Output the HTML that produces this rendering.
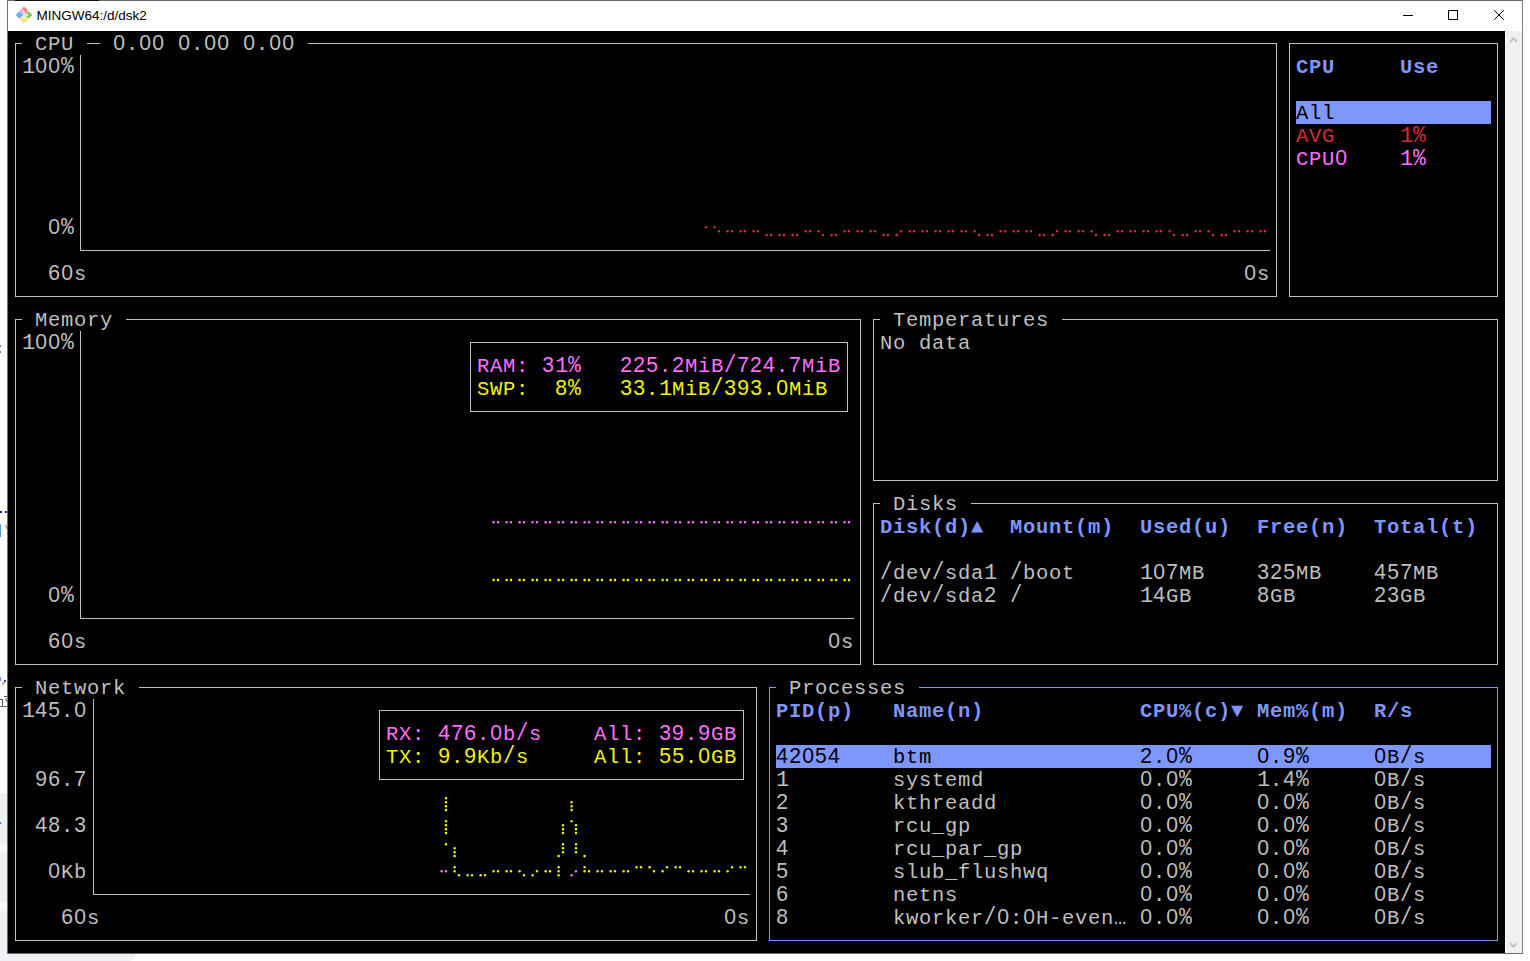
<!DOCTYPE html>
<html><head><meta charset="utf-8"><title>MINGW64:/d/dsk2</title>
<style>
html,body{margin:0;padding:0;background:#fff;}
body{width:1530px;height:961px;position:relative;overflow:hidden;font-family:"Liberation Sans",sans-serif;}
#win{position:absolute;left:7px;top:0;width:1516px;height:954px;background:#fff;}
#bt{position:absolute;left:7px;top:0;width:1516px;height:1px;background:#6b6b6b;}
#bl{position:absolute;left:7px;top:0;width:1px;height:954px;background:#707070;}
#br{position:absolute;left:1522px;top:0;width:1px;height:954px;background:#808080;}
#bb{position:absolute;left:7px;top:953px;width:1516px;height:1px;background:#6b6b6b;}
#title{position:absolute;left:36.5px;top:8px;font-size:13.5px;line-height:16px;color:#000;white-space:pre;}
#term{position:absolute;left:8px;top:31px;width:1497px;height:922px;background:#000;}
#sb{position:absolute;left:1506px;top:31px;width:16px;height:922px;background:#f0f0f0;}
.t{position:absolute;height:23px;line-height:23px;font-family:"Liberation Mono",monospace;font-size:20.500px;letter-spacing:0.6980px;white-space:pre;color:#bfbfbf;}
.b{font-weight:bold;-webkit-text-stroke:0;}
.d{font-family:"Liberation Sans",sans-serif;font-size:21.2px;letter-spacing:1.2096px;line-height:0;position:relative;left:0.15px;}
.p{transform:scale(1.04,1.13);transform-origin:0 17px;}
.q{transform:scale(1,1.2);transform-origin:0 17px;}
.o{font-size:22.1px;letter-spacing:-0.2622px;line-height:0;}
.h{position:absolute;}
svg{position:absolute;left:0;top:0;}
</style></head><body>
<div class="h" style="left:0px;top:793px;width:7px;height:168px;background:#eff0f4;"></div><div class="h" style="left:0px;top:843px;width:7px;height:8.5px;background:#f8f8fa;"></div><div class="h" style="left:0px;top:902px;width:7px;height:9px;background:#f8f8fa;"></div><div class="h" style="left:0px;top:954px;width:136px;height:7px;background:#f0f1f4;border-radius:0 0 26px 0;"></div><div class="h" style="left:0px;top:345px;width:1.3px;height:1.6px;background:#5b7fc7;"></div><div class="h" style="left:0px;top:351px;width:1.3px;height:2.4px;background:#5b7fc7;"></div><div class="h" style="left:0px;top:511px;width:2px;height:2px;background:#2a00b0;"></div><div class="h" style="left:5px;top:511px;width:2px;height:2px;background:#5a109a;"></div><div class="h" style="left:0px;top:524px;width:1.2px;height:13px;background:#5b9bd5;"></div><div class="h" style="left:5.5px;top:525px;width:1.2px;height:5px;background:#8c7a70;transform:rotate(-20deg);"></div><div class="h" style="left:0px;top:677px;width:1.3px;height:3.5px;background:#5b8fd0;"></div><div class="h" style="left:3.6px;top:680px;width:2.2px;height:2.4px;background:#4a4f80;"></div><div class="h" style="left:3.2px;top:682px;width:1.4px;height:2.6px;background:#6a6070;transform:rotate(35deg);"></div><div class="h" style="left:3.5px;top:696px;width:3.5px;height:1px;background:#555;"></div><div class="h" style="left:0px;top:699px;width:2.6px;height:1px;background:#555;"></div><div class="h" style="left:2px;top:699px;width:1px;height:7px;background:#555;"></div><div class="h" style="left:0px;top:706px;width:7px;height:1px;background:#666;"></div><div class="h" style="left:5.6px;top:698px;width:1px;height:5px;background:#667;transform:rotate(-25deg);"></div><div class="h" style="left:0px;top:822px;width:1.3px;height:1.6px;background:#3a7bd5;"></div>
<div id="win"></div><div id="term"></div><div id="sb"></div>
<div id="bt"></div><div id="bl"></div><div id="br"></div><div id="bb"></div>
<div class="h" style="left:15px;top:0;width:84px;height:1px;background:#111"></div><div id="title">MINGW64:/d/dsk2</div>
<svg width="1530" height="961" viewBox="0 0 1530 961"><g transform="translate(24,14.9) rotate(45)"><rect x="-5.95" y="-5.95" width="5.6" height="5.6" rx="0.7" fill="#ff7a7c"/><rect x="0.35" y="-5.95" width="5.6" height="5.6" rx="0.7" fill="#7dcd55"/><rect x="-5.95" y="0.35" width="5.6" height="5.6" rx="0.7" fill="#78aaff"/><rect x="0.35" y="0.35" width="5.6" height="5.6" rx="0.7" fill="#ffe173"/><path d="M-6.2 -2.45L-2.1 -2.15" stroke="#fff" stroke-width="1.1" fill="none"/></g><path d="M24 11.9V18.25M24 14.95H27.25" stroke="#fff" stroke-width="0.75" fill="none"/><circle cx="24" cy="11.9" r="0.95" fill="#fff"/><circle cx="27.25" cy="15" r="0.95" fill="#fff"/><circle cx="24" cy="18.25" r="0.95" fill="#fff"/><g stroke="#000" stroke-width="1" fill="none" shape-rendering="crispEdges"><path d="M1403 15.5H1413"/><rect x="1448.5" y="10.5" width="9" height="9"/></g><path d="M1494.2 10.2L1503.8 19.8M1503.8 10.2L1494.2 19.8" stroke="#000" stroke-width="1" fill="none"/><path d="M1513.5 37L1517 40.5V43L1513.5 39.8L1510 43V40.5Z" fill="#c1c1c1"/><path d="M1510 942L1513.5 945.2L1517 942V944.5L1513.5 948L1510 944.5Z" fill="#c1c1c1"/><g shape-rendering="crispEdges"><rect x="1296" y="101" width="195" height="23" fill="#7d97ff"/><rect x="776" y="745" width="715" height="23" fill="#7d97ff"/><path fill="#bfbfbf" d="M15 43h1v254h-1zM1276 43h1v254h-1zM15 296h1262v1h-1262zM15 43h7v1h-7zM87 43h13v1h-13zM308 43h969v1h-969zM80 55h1v196h-1zM80 250h1190v1h-1190zM1289 43h1v254h-1zM1497 43h1v254h-1zM1289 296h209v1h-209zM1289 43h209v1h-209zM15 319h1v346h-1zM860 319h1v346h-1zM15 664h846v1h-846zM15 319h7v1h-7zM126 319h735v1h-735zM80 331h1v288h-1zM80 618h774v1h-774zM470 342h1v70h-1zM847 342h1v70h-1zM470 411h378v1h-378zM470 342h378v1h-378zM873 319h1v162h-1zM1497 319h1v162h-1zM873 480h625v1h-625zM873 319h7v1h-7zM1062 319h436v1h-436zM873 503h1v162h-1zM1497 503h1v162h-1zM873 664h625v1h-625zM873 503h7v1h-7zM971 503h527v1h-527zM15 687h1v254h-1zM756 687h1v254h-1zM15 940h742v1h-742zM15 687h7v1h-7zM139 687h618v1h-618zM93 699h1v196h-1zM93 894h657v1h-657zM379 710h1v70h-1zM743 710h1v70h-1zM379 779h365v1h-365zM379 710h365v1h-365z"/><path fill="#7d97ff" d="M769 687h1v254h-1zM1497 687h1v254h-1zM769 940h729v1h-729zM769 687h7v1h-7zM919 687h579v1h-579z"/></g><path fill="#d42c3a" d="M704.7 227.3a1.30 1.30 0 1 0 2.60 0a1.30 1.30 0 1 0 -2.60 0zM713.3 227.3a1.30 1.30 0 1 0 2.60 0a1.30 1.30 0 1 0 -2.60 0zM717.7 231.2a1.30 1.30 0 1 0 2.60 0a1.30 1.30 0 1 0 -2.60 0zM726.3 231.2a1.30 1.30 0 1 0 2.60 0a1.30 1.30 0 1 0 -2.60 0zM730.7 231.2a1.30 1.30 0 1 0 2.60 0a1.30 1.30 0 1 0 -2.60 0zM739.3 231.2a1.30 1.30 0 1 0 2.60 0a1.30 1.30 0 1 0 -2.60 0zM743.7 231.2a1.30 1.30 0 1 0 2.60 0a1.30 1.30 0 1 0 -2.60 0zM752.3 231.2a1.30 1.30 0 1 0 2.60 0a1.30 1.30 0 1 0 -2.60 0zM756.7 231.2a1.30 1.30 0 1 0 2.60 0a1.30 1.30 0 1 0 -2.60 0zM765.3 235.1a1.30 1.30 0 1 0 2.60 0a1.30 1.30 0 1 0 -2.60 0zM769.7 235.1a1.30 1.30 0 1 0 2.60 0a1.30 1.30 0 1 0 -2.60 0zM778.3 235.1a1.30 1.30 0 1 0 2.60 0a1.30 1.30 0 1 0 -2.60 0zM782.7 235.1a1.30 1.30 0 1 0 2.60 0a1.30 1.30 0 1 0 -2.60 0zM791.3 235.1a1.30 1.30 0 1 0 2.60 0a1.30 1.30 0 1 0 -2.60 0zM795.7 235.1a1.30 1.30 0 1 0 2.60 0a1.30 1.30 0 1 0 -2.60 0zM804.3 231.2a1.30 1.30 0 1 0 2.60 0a1.30 1.30 0 1 0 -2.60 0zM808.7 231.2a1.30 1.30 0 1 0 2.60 0a1.30 1.30 0 1 0 -2.60 0zM817.3 231.2a1.30 1.30 0 1 0 2.60 0a1.30 1.30 0 1 0 -2.60 0zM821.7 235.1a1.30 1.30 0 1 0 2.60 0a1.30 1.30 0 1 0 -2.60 0zM830.3 235.1a1.30 1.30 0 1 0 2.60 0a1.30 1.30 0 1 0 -2.60 0zM834.7 235.1a1.30 1.30 0 1 0 2.60 0a1.30 1.30 0 1 0 -2.60 0zM843.3 231.2a1.30 1.30 0 1 0 2.60 0a1.30 1.30 0 1 0 -2.60 0zM847.7 231.2a1.30 1.30 0 1 0 2.60 0a1.30 1.30 0 1 0 -2.60 0zM856.3 231.2a1.30 1.30 0 1 0 2.60 0a1.30 1.30 0 1 0 -2.60 0zM860.7 231.2a1.30 1.30 0 1 0 2.60 0a1.30 1.30 0 1 0 -2.60 0zM869.3 231.2a1.30 1.30 0 1 0 2.60 0a1.30 1.30 0 1 0 -2.60 0zM873.7 231.2a1.30 1.30 0 1 0 2.60 0a1.30 1.30 0 1 0 -2.60 0zM882.3 235.1a1.30 1.30 0 1 0 2.60 0a1.30 1.30 0 1 0 -2.60 0zM886.7 235.1a1.30 1.30 0 1 0 2.60 0a1.30 1.30 0 1 0 -2.60 0zM895.3 235.1a1.30 1.30 0 1 0 2.60 0a1.30 1.30 0 1 0 -2.60 0zM899.7 231.2a1.30 1.30 0 1 0 2.60 0a1.30 1.30 0 1 0 -2.60 0zM908.3 231.2a1.30 1.30 0 1 0 2.60 0a1.30 1.30 0 1 0 -2.60 0zM912.7 231.2a1.30 1.30 0 1 0 2.60 0a1.30 1.30 0 1 0 -2.60 0zM921.3 231.2a1.30 1.30 0 1 0 2.60 0a1.30 1.30 0 1 0 -2.60 0zM925.7 231.2a1.30 1.30 0 1 0 2.60 0a1.30 1.30 0 1 0 -2.60 0zM934.3 231.2a1.30 1.30 0 1 0 2.60 0a1.30 1.30 0 1 0 -2.60 0zM938.7 231.2a1.30 1.30 0 1 0 2.60 0a1.30 1.30 0 1 0 -2.60 0zM947.3 231.2a1.30 1.30 0 1 0 2.60 0a1.30 1.30 0 1 0 -2.60 0zM951.7 231.2a1.30 1.30 0 1 0 2.60 0a1.30 1.30 0 1 0 -2.60 0zM960.3 231.2a1.30 1.30 0 1 0 2.60 0a1.30 1.30 0 1 0 -2.60 0zM964.7 231.2a1.30 1.30 0 1 0 2.60 0a1.30 1.30 0 1 0 -2.60 0zM973.3 231.2a1.30 1.30 0 1 0 2.60 0a1.30 1.30 0 1 0 -2.60 0zM977.7 235.1a1.30 1.30 0 1 0 2.60 0a1.30 1.30 0 1 0 -2.60 0zM986.3 235.1a1.30 1.30 0 1 0 2.60 0a1.30 1.30 0 1 0 -2.60 0zM990.7 235.1a1.30 1.30 0 1 0 2.60 0a1.30 1.30 0 1 0 -2.60 0zM999.3 231.2a1.30 1.30 0 1 0 2.60 0a1.30 1.30 0 1 0 -2.60 0zM1003.7 231.2a1.30 1.30 0 1 0 2.60 0a1.30 1.30 0 1 0 -2.60 0zM1012.3 231.2a1.30 1.30 0 1 0 2.60 0a1.30 1.30 0 1 0 -2.60 0zM1016.7 231.2a1.30 1.30 0 1 0 2.60 0a1.30 1.30 0 1 0 -2.60 0zM1025.3 231.2a1.30 1.30 0 1 0 2.60 0a1.30 1.30 0 1 0 -2.60 0zM1029.7 231.2a1.30 1.30 0 1 0 2.60 0a1.30 1.30 0 1 0 -2.60 0zM1038.3 235.1a1.30 1.30 0 1 0 2.60 0a1.30 1.30 0 1 0 -2.60 0zM1042.7 235.1a1.30 1.30 0 1 0 2.60 0a1.30 1.30 0 1 0 -2.60 0zM1051.3 235.1a1.30 1.30 0 1 0 2.60 0a1.30 1.30 0 1 0 -2.60 0zM1055.7 231.2a1.30 1.30 0 1 0 2.60 0a1.30 1.30 0 1 0 -2.60 0zM1064.3 231.2a1.30 1.30 0 1 0 2.60 0a1.30 1.30 0 1 0 -2.60 0zM1068.7 231.2a1.30 1.30 0 1 0 2.60 0a1.30 1.30 0 1 0 -2.60 0zM1077.3 231.2a1.30 1.30 0 1 0 2.60 0a1.30 1.30 0 1 0 -2.60 0zM1081.7 231.2a1.30 1.30 0 1 0 2.60 0a1.30 1.30 0 1 0 -2.60 0zM1090.3 231.2a1.30 1.30 0 1 0 2.60 0a1.30 1.30 0 1 0 -2.60 0zM1094.7 235.1a1.30 1.30 0 1 0 2.60 0a1.30 1.30 0 1 0 -2.60 0zM1103.3 235.1a1.30 1.30 0 1 0 2.60 0a1.30 1.30 0 1 0 -2.60 0zM1107.7 235.1a1.30 1.30 0 1 0 2.60 0a1.30 1.30 0 1 0 -2.60 0zM1116.3 231.2a1.30 1.30 0 1 0 2.60 0a1.30 1.30 0 1 0 -2.60 0zM1120.7 231.2a1.30 1.30 0 1 0 2.60 0a1.30 1.30 0 1 0 -2.60 0zM1129.3 231.2a1.30 1.30 0 1 0 2.60 0a1.30 1.30 0 1 0 -2.60 0zM1133.7 231.2a1.30 1.30 0 1 0 2.60 0a1.30 1.30 0 1 0 -2.60 0zM1142.3 231.2a1.30 1.30 0 1 0 2.60 0a1.30 1.30 0 1 0 -2.60 0zM1146.7 231.2a1.30 1.30 0 1 0 2.60 0a1.30 1.30 0 1 0 -2.60 0zM1155.3 231.2a1.30 1.30 0 1 0 2.60 0a1.30 1.30 0 1 0 -2.60 0zM1159.7 231.2a1.30 1.30 0 1 0 2.60 0a1.30 1.30 0 1 0 -2.60 0zM1168.3 231.2a1.30 1.30 0 1 0 2.60 0a1.30 1.30 0 1 0 -2.60 0zM1172.7 235.1a1.30 1.30 0 1 0 2.60 0a1.30 1.30 0 1 0 -2.60 0zM1181.3 235.1a1.30 1.30 0 1 0 2.60 0a1.30 1.30 0 1 0 -2.60 0zM1185.7 235.1a1.30 1.30 0 1 0 2.60 0a1.30 1.30 0 1 0 -2.60 0zM1194.3 231.2a1.30 1.30 0 1 0 2.60 0a1.30 1.30 0 1 0 -2.60 0zM1198.7 231.2a1.30 1.30 0 1 0 2.60 0a1.30 1.30 0 1 0 -2.60 0zM1207.3 231.2a1.30 1.30 0 1 0 2.60 0a1.30 1.30 0 1 0 -2.60 0zM1211.7 235.1a1.30 1.30 0 1 0 2.60 0a1.30 1.30 0 1 0 -2.60 0zM1220.3 235.1a1.30 1.30 0 1 0 2.60 0a1.30 1.30 0 1 0 -2.60 0zM1224.7 235.1a1.30 1.30 0 1 0 2.60 0a1.30 1.30 0 1 0 -2.60 0zM1233.3 231.2a1.30 1.30 0 1 0 2.60 0a1.30 1.30 0 1 0 -2.60 0zM1237.7 231.2a1.30 1.30 0 1 0 2.60 0a1.30 1.30 0 1 0 -2.60 0zM1246.3 231.2a1.30 1.30 0 1 0 2.60 0a1.30 1.30 0 1 0 -2.60 0zM1250.7 231.2a1.30 1.30 0 1 0 2.60 0a1.30 1.30 0 1 0 -2.60 0zM1259.3 231.2a1.30 1.30 0 1 0 2.60 0a1.30 1.30 0 1 0 -2.60 0zM1263.7 231.2a1.30 1.30 0 1 0 2.60 0a1.30 1.30 0 1 0 -2.60 0z"/><path fill="#ff70ff" d="M492.3 522.3a1.30 1.30 0 1 0 2.60 0a1.30 1.30 0 1 0 -2.60 0zM496.7 522.3a1.30 1.30 0 1 0 2.60 0a1.30 1.30 0 1 0 -2.60 0zM505.3 522.3a1.30 1.30 0 1 0 2.60 0a1.30 1.30 0 1 0 -2.60 0zM509.7 522.3a1.30 1.30 0 1 0 2.60 0a1.30 1.30 0 1 0 -2.60 0zM518.3 522.3a1.30 1.30 0 1 0 2.60 0a1.30 1.30 0 1 0 -2.60 0zM522.7 522.3a1.30 1.30 0 1 0 2.60 0a1.30 1.30 0 1 0 -2.60 0zM531.3 522.3a1.30 1.30 0 1 0 2.60 0a1.30 1.30 0 1 0 -2.60 0zM535.7 522.3a1.30 1.30 0 1 0 2.60 0a1.30 1.30 0 1 0 -2.60 0zM544.3 522.3a1.30 1.30 0 1 0 2.60 0a1.30 1.30 0 1 0 -2.60 0zM548.7 522.3a1.30 1.30 0 1 0 2.60 0a1.30 1.30 0 1 0 -2.60 0zM557.3 522.3a1.30 1.30 0 1 0 2.60 0a1.30 1.30 0 1 0 -2.60 0zM561.7 522.3a1.30 1.30 0 1 0 2.60 0a1.30 1.30 0 1 0 -2.60 0zM570.3 522.3a1.30 1.30 0 1 0 2.60 0a1.30 1.30 0 1 0 -2.60 0zM574.7 522.3a1.30 1.30 0 1 0 2.60 0a1.30 1.30 0 1 0 -2.60 0zM583.3 522.3a1.30 1.30 0 1 0 2.60 0a1.30 1.30 0 1 0 -2.60 0zM587.7 522.3a1.30 1.30 0 1 0 2.60 0a1.30 1.30 0 1 0 -2.60 0zM596.3 522.3a1.30 1.30 0 1 0 2.60 0a1.30 1.30 0 1 0 -2.60 0zM600.7 522.3a1.30 1.30 0 1 0 2.60 0a1.30 1.30 0 1 0 -2.60 0zM609.3 522.3a1.30 1.30 0 1 0 2.60 0a1.30 1.30 0 1 0 -2.60 0zM613.7 522.3a1.30 1.30 0 1 0 2.60 0a1.30 1.30 0 1 0 -2.60 0zM622.3 522.3a1.30 1.30 0 1 0 2.60 0a1.30 1.30 0 1 0 -2.60 0zM626.7 522.3a1.30 1.30 0 1 0 2.60 0a1.30 1.30 0 1 0 -2.60 0zM635.3 522.3a1.30 1.30 0 1 0 2.60 0a1.30 1.30 0 1 0 -2.60 0zM639.7 522.3a1.30 1.30 0 1 0 2.60 0a1.30 1.30 0 1 0 -2.60 0zM648.3 522.3a1.30 1.30 0 1 0 2.60 0a1.30 1.30 0 1 0 -2.60 0zM652.7 522.3a1.30 1.30 0 1 0 2.60 0a1.30 1.30 0 1 0 -2.60 0zM661.3 522.3a1.30 1.30 0 1 0 2.60 0a1.30 1.30 0 1 0 -2.60 0zM665.7 522.3a1.30 1.30 0 1 0 2.60 0a1.30 1.30 0 1 0 -2.60 0zM674.3 522.3a1.30 1.30 0 1 0 2.60 0a1.30 1.30 0 1 0 -2.60 0zM678.7 522.3a1.30 1.30 0 1 0 2.60 0a1.30 1.30 0 1 0 -2.60 0zM687.3 522.3a1.30 1.30 0 1 0 2.60 0a1.30 1.30 0 1 0 -2.60 0zM691.7 522.3a1.30 1.30 0 1 0 2.60 0a1.30 1.30 0 1 0 -2.60 0zM700.3 522.3a1.30 1.30 0 1 0 2.60 0a1.30 1.30 0 1 0 -2.60 0zM704.7 522.3a1.30 1.30 0 1 0 2.60 0a1.30 1.30 0 1 0 -2.60 0zM713.3 522.3a1.30 1.30 0 1 0 2.60 0a1.30 1.30 0 1 0 -2.60 0zM717.7 522.3a1.30 1.30 0 1 0 2.60 0a1.30 1.30 0 1 0 -2.60 0zM726.3 522.3a1.30 1.30 0 1 0 2.60 0a1.30 1.30 0 1 0 -2.60 0zM730.7 522.3a1.30 1.30 0 1 0 2.60 0a1.30 1.30 0 1 0 -2.60 0zM739.3 522.3a1.30 1.30 0 1 0 2.60 0a1.30 1.30 0 1 0 -2.60 0zM743.7 522.3a1.30 1.30 0 1 0 2.60 0a1.30 1.30 0 1 0 -2.60 0zM752.3 522.3a1.30 1.30 0 1 0 2.60 0a1.30 1.30 0 1 0 -2.60 0zM756.7 522.3a1.30 1.30 0 1 0 2.60 0a1.30 1.30 0 1 0 -2.60 0zM765.3 522.3a1.30 1.30 0 1 0 2.60 0a1.30 1.30 0 1 0 -2.60 0zM769.7 522.3a1.30 1.30 0 1 0 2.60 0a1.30 1.30 0 1 0 -2.60 0zM778.3 522.3a1.30 1.30 0 1 0 2.60 0a1.30 1.30 0 1 0 -2.60 0zM782.7 522.3a1.30 1.30 0 1 0 2.60 0a1.30 1.30 0 1 0 -2.60 0zM791.3 522.3a1.30 1.30 0 1 0 2.60 0a1.30 1.30 0 1 0 -2.60 0zM795.7 522.3a1.30 1.30 0 1 0 2.60 0a1.30 1.30 0 1 0 -2.60 0zM804.3 522.3a1.30 1.30 0 1 0 2.60 0a1.30 1.30 0 1 0 -2.60 0zM808.7 522.3a1.30 1.30 0 1 0 2.60 0a1.30 1.30 0 1 0 -2.60 0zM817.3 522.3a1.30 1.30 0 1 0 2.60 0a1.30 1.30 0 1 0 -2.60 0zM821.7 522.3a1.30 1.30 0 1 0 2.60 0a1.30 1.30 0 1 0 -2.60 0zM830.3 522.3a1.30 1.30 0 1 0 2.60 0a1.30 1.30 0 1 0 -2.60 0zM834.7 522.3a1.30 1.30 0 1 0 2.60 0a1.30 1.30 0 1 0 -2.60 0zM843.3 522.3a1.30 1.30 0 1 0 2.60 0a1.30 1.30 0 1 0 -2.60 0zM847.7 522.3a1.30 1.30 0 1 0 2.60 0a1.30 1.30 0 1 0 -2.60 0zM440.3 871.3a1.30 1.30 0 1 0 2.60 0a1.30 1.30 0 1 0 -2.60 0zM444.7 871.3a1.30 1.30 0 1 0 2.60 0a1.30 1.30 0 1 0 -2.60 0zM570.3 875.2a1.30 1.30 0 1 0 2.60 0a1.30 1.30 0 1 0 -2.60 0zM574.7 871.3a1.30 1.30 0 1 0 2.60 0a1.30 1.30 0 1 0 -2.60 0z"/><path fill="#f2f200" d="M492.3 580.1a1.30 1.30 0 1 0 2.60 0a1.30 1.30 0 1 0 -2.60 0zM496.7 580.1a1.30 1.30 0 1 0 2.60 0a1.30 1.30 0 1 0 -2.60 0zM505.3 580.1a1.30 1.30 0 1 0 2.60 0a1.30 1.30 0 1 0 -2.60 0zM509.7 580.1a1.30 1.30 0 1 0 2.60 0a1.30 1.30 0 1 0 -2.60 0zM518.3 580.1a1.30 1.30 0 1 0 2.60 0a1.30 1.30 0 1 0 -2.60 0zM522.7 580.1a1.30 1.30 0 1 0 2.60 0a1.30 1.30 0 1 0 -2.60 0zM531.3 580.1a1.30 1.30 0 1 0 2.60 0a1.30 1.30 0 1 0 -2.60 0zM535.7 580.1a1.30 1.30 0 1 0 2.60 0a1.30 1.30 0 1 0 -2.60 0zM544.3 580.1a1.30 1.30 0 1 0 2.60 0a1.30 1.30 0 1 0 -2.60 0zM548.7 580.1a1.30 1.30 0 1 0 2.60 0a1.30 1.30 0 1 0 -2.60 0zM557.3 580.1a1.30 1.30 0 1 0 2.60 0a1.30 1.30 0 1 0 -2.60 0zM561.7 580.1a1.30 1.30 0 1 0 2.60 0a1.30 1.30 0 1 0 -2.60 0zM570.3 580.1a1.30 1.30 0 1 0 2.60 0a1.30 1.30 0 1 0 -2.60 0zM574.7 580.1a1.30 1.30 0 1 0 2.60 0a1.30 1.30 0 1 0 -2.60 0zM583.3 580.1a1.30 1.30 0 1 0 2.60 0a1.30 1.30 0 1 0 -2.60 0zM587.7 580.1a1.30 1.30 0 1 0 2.60 0a1.30 1.30 0 1 0 -2.60 0zM596.3 580.1a1.30 1.30 0 1 0 2.60 0a1.30 1.30 0 1 0 -2.60 0zM600.7 580.1a1.30 1.30 0 1 0 2.60 0a1.30 1.30 0 1 0 -2.60 0zM609.3 580.1a1.30 1.30 0 1 0 2.60 0a1.30 1.30 0 1 0 -2.60 0zM613.7 580.1a1.30 1.30 0 1 0 2.60 0a1.30 1.30 0 1 0 -2.60 0zM622.3 580.1a1.30 1.30 0 1 0 2.60 0a1.30 1.30 0 1 0 -2.60 0zM626.7 580.1a1.30 1.30 0 1 0 2.60 0a1.30 1.30 0 1 0 -2.60 0zM635.3 580.1a1.30 1.30 0 1 0 2.60 0a1.30 1.30 0 1 0 -2.60 0zM639.7 580.1a1.30 1.30 0 1 0 2.60 0a1.30 1.30 0 1 0 -2.60 0zM648.3 580.1a1.30 1.30 0 1 0 2.60 0a1.30 1.30 0 1 0 -2.60 0zM652.7 580.1a1.30 1.30 0 1 0 2.60 0a1.30 1.30 0 1 0 -2.60 0zM661.3 580.1a1.30 1.30 0 1 0 2.60 0a1.30 1.30 0 1 0 -2.60 0zM665.7 580.1a1.30 1.30 0 1 0 2.60 0a1.30 1.30 0 1 0 -2.60 0zM674.3 580.1a1.30 1.30 0 1 0 2.60 0a1.30 1.30 0 1 0 -2.60 0zM678.7 580.1a1.30 1.30 0 1 0 2.60 0a1.30 1.30 0 1 0 -2.60 0zM687.3 580.1a1.30 1.30 0 1 0 2.60 0a1.30 1.30 0 1 0 -2.60 0zM691.7 580.1a1.30 1.30 0 1 0 2.60 0a1.30 1.30 0 1 0 -2.60 0zM700.3 580.1a1.30 1.30 0 1 0 2.60 0a1.30 1.30 0 1 0 -2.60 0zM704.7 580.1a1.30 1.30 0 1 0 2.60 0a1.30 1.30 0 1 0 -2.60 0zM713.3 580.1a1.30 1.30 0 1 0 2.60 0a1.30 1.30 0 1 0 -2.60 0zM717.7 580.1a1.30 1.30 0 1 0 2.60 0a1.30 1.30 0 1 0 -2.60 0zM726.3 580.1a1.30 1.30 0 1 0 2.60 0a1.30 1.30 0 1 0 -2.60 0zM730.7 580.1a1.30 1.30 0 1 0 2.60 0a1.30 1.30 0 1 0 -2.60 0zM739.3 580.1a1.30 1.30 0 1 0 2.60 0a1.30 1.30 0 1 0 -2.60 0zM743.7 580.1a1.30 1.30 0 1 0 2.60 0a1.30 1.30 0 1 0 -2.60 0zM752.3 580.1a1.30 1.30 0 1 0 2.60 0a1.30 1.30 0 1 0 -2.60 0zM756.7 580.1a1.30 1.30 0 1 0 2.60 0a1.30 1.30 0 1 0 -2.60 0zM765.3 580.1a1.30 1.30 0 1 0 2.60 0a1.30 1.30 0 1 0 -2.60 0zM769.7 580.1a1.30 1.30 0 1 0 2.60 0a1.30 1.30 0 1 0 -2.60 0zM778.3 580.1a1.30 1.30 0 1 0 2.60 0a1.30 1.30 0 1 0 -2.60 0zM782.7 580.1a1.30 1.30 0 1 0 2.60 0a1.30 1.30 0 1 0 -2.60 0zM791.3 580.1a1.30 1.30 0 1 0 2.60 0a1.30 1.30 0 1 0 -2.60 0zM795.7 580.1a1.30 1.30 0 1 0 2.60 0a1.30 1.30 0 1 0 -2.60 0zM804.3 580.1a1.30 1.30 0 1 0 2.60 0a1.30 1.30 0 1 0 -2.60 0zM808.7 580.1a1.30 1.30 0 1 0 2.60 0a1.30 1.30 0 1 0 -2.60 0zM817.3 580.1a1.30 1.30 0 1 0 2.60 0a1.30 1.30 0 1 0 -2.60 0zM821.7 580.1a1.30 1.30 0 1 0 2.60 0a1.30 1.30 0 1 0 -2.60 0zM830.3 580.1a1.30 1.30 0 1 0 2.60 0a1.30 1.30 0 1 0 -2.60 0zM834.7 580.1a1.30 1.30 0 1 0 2.60 0a1.30 1.30 0 1 0 -2.60 0zM843.3 580.1a1.30 1.30 0 1 0 2.60 0a1.30 1.30 0 1 0 -2.60 0zM847.7 580.1a1.30 1.30 0 1 0 2.60 0a1.30 1.30 0 1 0 -2.60 0zM444.7 798.3a1.30 1.30 0 1 0 2.60 0a1.30 1.30 0 1 0 -2.60 0zM444.7 802.3a1.30 1.30 0 1 0 2.60 0a1.30 1.30 0 1 0 -2.60 0zM444.7 806.2a1.30 1.30 0 1 0 2.60 0a1.30 1.30 0 1 0 -2.60 0zM444.7 810.1a1.30 1.30 0 1 0 2.60 0a1.30 1.30 0 1 0 -2.60 0zM444.7 821.3a1.30 1.30 0 1 0 2.60 0a1.30 1.30 0 1 0 -2.60 0zM444.7 825.3a1.30 1.30 0 1 0 2.60 0a1.30 1.30 0 1 0 -2.60 0zM444.7 829.2a1.30 1.30 0 1 0 2.60 0a1.30 1.30 0 1 0 -2.60 0zM444.7 833.1a1.30 1.30 0 1 0 2.60 0a1.30 1.30 0 1 0 -2.60 0zM444.7 844.3a1.30 1.30 0 1 0 2.60 0a1.30 1.30 0 1 0 -2.60 0zM453.3 848.3a1.30 1.30 0 1 0 2.60 0a1.30 1.30 0 1 0 -2.60 0zM453.3 852.2a1.30 1.30 0 1 0 2.60 0a1.30 1.30 0 1 0 -2.60 0zM453.3 856.1a1.30 1.30 0 1 0 2.60 0a1.30 1.30 0 1 0 -2.60 0zM453.3 867.3a1.30 1.30 0 1 0 2.60 0a1.30 1.30 0 1 0 -2.60 0zM453.3 871.3a1.30 1.30 0 1 0 2.60 0a1.30 1.30 0 1 0 -2.60 0zM457.7 875.2a1.30 1.30 0 1 0 2.60 0a1.30 1.30 0 1 0 -2.60 0zM466.3 875.2a1.30 1.30 0 1 0 2.60 0a1.30 1.30 0 1 0 -2.60 0zM470.7 875.2a1.30 1.30 0 1 0 2.60 0a1.30 1.30 0 1 0 -2.60 0zM479.3 875.2a1.30 1.30 0 1 0 2.60 0a1.30 1.30 0 1 0 -2.60 0zM483.7 875.2a1.30 1.30 0 1 0 2.60 0a1.30 1.30 0 1 0 -2.60 0zM492.3 871.3a1.30 1.30 0 1 0 2.60 0a1.30 1.30 0 1 0 -2.60 0zM496.7 871.3a1.30 1.30 0 1 0 2.60 0a1.30 1.30 0 1 0 -2.60 0zM505.3 871.3a1.30 1.30 0 1 0 2.60 0a1.30 1.30 0 1 0 -2.60 0zM509.7 871.3a1.30 1.30 0 1 0 2.60 0a1.30 1.30 0 1 0 -2.60 0zM518.3 871.3a1.30 1.30 0 1 0 2.60 0a1.30 1.30 0 1 0 -2.60 0zM522.7 875.2a1.30 1.30 0 1 0 2.60 0a1.30 1.30 0 1 0 -2.60 0zM531.3 875.2a1.30 1.30 0 1 0 2.60 0a1.30 1.30 0 1 0 -2.60 0zM535.7 871.3a1.30 1.30 0 1 0 2.60 0a1.30 1.30 0 1 0 -2.60 0zM544.3 871.3a1.30 1.30 0 1 0 2.60 0a1.30 1.30 0 1 0 -2.60 0zM548.7 871.3a1.30 1.30 0 1 0 2.60 0a1.30 1.30 0 1 0 -2.60 0zM596.3 871.3a1.30 1.30 0 1 0 2.60 0a1.30 1.30 0 1 0 -2.60 0zM600.7 871.3a1.30 1.30 0 1 0 2.60 0a1.30 1.30 0 1 0 -2.60 0zM609.3 871.3a1.30 1.30 0 1 0 2.60 0a1.30 1.30 0 1 0 -2.60 0zM613.7 871.3a1.30 1.30 0 1 0 2.60 0a1.30 1.30 0 1 0 -2.60 0zM622.3 871.3a1.30 1.30 0 1 0 2.60 0a1.30 1.30 0 1 0 -2.60 0zM626.7 871.3a1.30 1.30 0 1 0 2.60 0a1.30 1.30 0 1 0 -2.60 0zM635.3 867.3a1.30 1.30 0 1 0 2.60 0a1.30 1.30 0 1 0 -2.60 0zM639.7 867.3a1.30 1.30 0 1 0 2.60 0a1.30 1.30 0 1 0 -2.60 0zM648.3 867.3a1.30 1.30 0 1 0 2.60 0a1.30 1.30 0 1 0 -2.60 0zM652.7 871.3a1.30 1.30 0 1 0 2.60 0a1.30 1.30 0 1 0 -2.60 0zM661.3 871.3a1.30 1.30 0 1 0 2.60 0a1.30 1.30 0 1 0 -2.60 0zM665.7 867.3a1.30 1.30 0 1 0 2.60 0a1.30 1.30 0 1 0 -2.60 0zM674.3 867.3a1.30 1.30 0 1 0 2.60 0a1.30 1.30 0 1 0 -2.60 0zM678.7 867.3a1.30 1.30 0 1 0 2.60 0a1.30 1.30 0 1 0 -2.60 0zM687.3 871.3a1.30 1.30 0 1 0 2.60 0a1.30 1.30 0 1 0 -2.60 0zM691.7 871.3a1.30 1.30 0 1 0 2.60 0a1.30 1.30 0 1 0 -2.60 0zM700.3 871.3a1.30 1.30 0 1 0 2.60 0a1.30 1.30 0 1 0 -2.60 0zM704.7 871.3a1.30 1.30 0 1 0 2.60 0a1.30 1.30 0 1 0 -2.60 0zM713.3 871.3a1.30 1.30 0 1 0 2.60 0a1.30 1.30 0 1 0 -2.60 0zM717.7 871.3a1.30 1.30 0 1 0 2.60 0a1.30 1.30 0 1 0 -2.60 0zM726.3 871.3a1.30 1.30 0 1 0 2.60 0a1.30 1.30 0 1 0 -2.60 0zM730.7 867.3a1.30 1.30 0 1 0 2.60 0a1.30 1.30 0 1 0 -2.60 0zM739.3 867.3a1.30 1.30 0 1 0 2.60 0a1.30 1.30 0 1 0 -2.60 0zM743.7 867.3a1.30 1.30 0 1 0 2.60 0a1.30 1.30 0 1 0 -2.60 0zM561.7 825.3a1.30 1.30 0 1 0 2.60 0a1.30 1.30 0 1 0 -2.60 0zM561.7 829.2a1.30 1.30 0 1 0 2.60 0a1.30 1.30 0 1 0 -2.60 0zM561.7 833.1a1.30 1.30 0 1 0 2.60 0a1.30 1.30 0 1 0 -2.60 0zM557.3 856.1a1.30 1.30 0 1 0 2.60 0a1.30 1.30 0 1 0 -2.60 0zM561.7 844.3a1.30 1.30 0 1 0 2.60 0a1.30 1.30 0 1 0 -2.60 0zM561.7 848.3a1.30 1.30 0 1 0 2.60 0a1.30 1.30 0 1 0 -2.60 0zM561.7 852.2a1.30 1.30 0 1 0 2.60 0a1.30 1.30 0 1 0 -2.60 0zM557.3 867.3a1.30 1.30 0 1 0 2.60 0a1.30 1.30 0 1 0 -2.60 0zM557.3 871.3a1.30 1.30 0 1 0 2.60 0a1.30 1.30 0 1 0 -2.60 0zM557.3 875.2a1.30 1.30 0 1 0 2.60 0a1.30 1.30 0 1 0 -2.60 0zM570.3 802.3a1.30 1.30 0 1 0 2.60 0a1.30 1.30 0 1 0 -2.60 0zM570.3 806.2a1.30 1.30 0 1 0 2.60 0a1.30 1.30 0 1 0 -2.60 0zM570.3 810.1a1.30 1.30 0 1 0 2.60 0a1.30 1.30 0 1 0 -2.60 0zM570.3 821.3a1.30 1.30 0 1 0 2.60 0a1.30 1.30 0 1 0 -2.60 0zM574.7 825.3a1.30 1.30 0 1 0 2.60 0a1.30 1.30 0 1 0 -2.60 0zM574.7 829.2a1.30 1.30 0 1 0 2.60 0a1.30 1.30 0 1 0 -2.60 0zM574.7 833.1a1.30 1.30 0 1 0 2.60 0a1.30 1.30 0 1 0 -2.60 0zM574.7 844.3a1.30 1.30 0 1 0 2.60 0a1.30 1.30 0 1 0 -2.60 0zM574.7 848.3a1.30 1.30 0 1 0 2.60 0a1.30 1.30 0 1 0 -2.60 0zM574.7 852.2a1.30 1.30 0 1 0 2.60 0a1.30 1.30 0 1 0 -2.60 0zM583.3 856.1a1.30 1.30 0 1 0 2.60 0a1.30 1.30 0 1 0 -2.60 0zM583.3 867.3a1.30 1.30 0 1 0 2.60 0a1.30 1.30 0 1 0 -2.60 0zM583.3 871.3a1.30 1.30 0 1 0 2.60 0a1.30 1.30 0 1 0 -2.60 0zM587.7 871.3a1.30 1.30 0 1 0 2.60 0a1.30 1.30 0 1 0 -2.60 0z"/></svg>
<div class="t" style="left:35px;top:33px;">CPU</div>
<div class="t" style="left:113px;top:33px;"><span class="d">0</span>.<span class="d">00</span> <span class="d">0</span>.<span class="d">00</span> <span class="d">0</span>.<span class="d">00</span></div>
<div class="t p" style="left:61px;top:56px;">%</div>
<div class="t" style="left:22px;top:56px;"><span class="o">1</span><span class="d">00</span></div>
<div class="t p" style="left:61px;top:217px;">%</div>
<div class="t" style="left:48px;top:217px;"><span class="d">0</span></div>
<div class="t" style="left:48px;top:263px;"><span class="d">60</span>s</div>
<div class="t" style="left:1244px;top:263px;"><span class="d">0</span>s</div>
<div class="t b" style="left:1296px;top:56px;color:#7d97ff;">CPU</div>
<div class="t b" style="left:1400px;top:56px;color:#7d97ff;">Use</div>
<div class="t" style="left:1296px;top:102px;color:#000;">All</div>
<div class="t" style="left:1296px;top:125px;color:#d42c3a;">AVG</div>
<div class="t p" style="left:1413px;top:125px;color:#d42c3a;">%</div>
<div class="t" style="left:1400px;top:125px;color:#d42c3a;"><span class="o">1</span></div>
<div class="t" style="left:1296px;top:148px;color:#ff70ff;">CPU<span class="d">0</span></div>
<div class="t p" style="left:1413px;top:148px;color:#ff70ff;">%</div>
<div class="t" style="left:1400px;top:148px;color:#ff70ff;"><span class="o">1</span></div>
<div class="t" style="left:35px;top:309px;">Memory</div>
<div class="t p" style="left:61px;top:332px;">%</div>
<div class="t" style="left:22px;top:332px;"><span class="o">1</span><span class="d">00</span></div>
<div class="t p" style="left:61px;top:585px;">%</div>
<div class="t" style="left:48px;top:585px;"><span class="d">0</span></div>
<div class="t" style="left:48px;top:631px;"><span class="d">60</span>s</div>
<div class="t" style="left:828px;top:631px;"><span class="d">0</span>s</div>
<div class="t p" style="left:568px;top:355px;color:#ff70ff;">%</div>
<div class="t q" style="left:724px;top:355px;color:#ff70ff;">/</div>
<div class="t" style="left:477px;top:355px;color:#ff70ff;">RAM: <span class="d">3</span><span class="o">1</span>    <span class="d">225</span>.<span class="d">2</span>MiB <span class="d">724</span>.<span class="d">7</span>MiB</div>
<div class="t p" style="left:568px;top:378px;color:#f2f200;">%</div>
<div class="t q" style="left:711px;top:378px;color:#f2f200;">/</div>
<div class="t" style="left:477px;top:378px;color:#f2f200;">SWP:  <span class="d">8</span>    <span class="d">33</span>.<span class="o">1</span>MiB <span class="d">393</span>.<span class="d">0</span>MiB</div>
<div class="t" style="left:893px;top:309px;">Temperatures</div>
<div class="t" style="left:880px;top:332px;">No data</div>
<div class="t" style="left:893px;top:493px;">Disks</div>
<div class="t b" style="left:880px;top:516px;color:#7d97ff;">Disk(d)▲</div>
<div class="t b" style="left:1010px;top:516px;color:#7d97ff;">Mount(m)</div>
<div class="t b" style="left:1140px;top:516px;color:#7d97ff;">Used(u)</div>
<div class="t b" style="left:1257px;top:516px;color:#7d97ff;">Free(n)</div>
<div class="t b" style="left:1374px;top:516px;color:#7d97ff;">Total(t)</div>
<div class="t q" style="left:880px;top:562px;">/</div>
<div class="t q" style="left:932px;top:562px;">/</div>
<div class="t q" style="left:1010px;top:562px;">/</div>
<div class="t" style="left:880px;top:562px;"> dev sda<span class="o">1</span>  boot</div>
<div class="t" style="left:1140px;top:562px;"><span class="o">1</span><span class="d">07</span>MB</div>
<div class="t" style="left:1257px;top:562px;"><span class="d">325</span>MB</div>
<div class="t" style="left:1374px;top:562px;"><span class="d">457</span>MB</div>
<div class="t q" style="left:880px;top:585px;">/</div>
<div class="t q" style="left:932px;top:585px;">/</div>
<div class="t q" style="left:1010px;top:585px;">/</div>
<div class="t" style="left:880px;top:585px;"> dev sda<span class="d">2</span></div>
<div class="t" style="left:1140px;top:585px;"><span class="o">1</span><span class="d">4</span>GB</div>
<div class="t" style="left:1257px;top:585px;"><span class="d">8</span>GB</div>
<div class="t" style="left:1374px;top:585px;"><span class="d">23</span>GB</div>
<div class="t" style="left:35px;top:677px;">Network</div>
<div class="t" style="left:22px;top:700px;"><span class="o">1</span><span class="d">45</span>.<span class="d">0</span></div>
<div class="t" style="left:35px;top:769px;"><span class="d">96</span>.<span class="d">7</span></div>
<div class="t" style="left:35px;top:815px;"><span class="d">48</span>.<span class="d">3</span></div>
<div class="t" style="left:48px;top:861px;"><span class="d">0</span>Kb</div>
<div class="t" style="left:61px;top:907px;"><span class="d">60</span>s</div>
<div class="t" style="left:724px;top:907px;"><span class="d">0</span>s</div>
<div class="t q" style="left:516px;top:723px;color:#ff70ff;">/</div>
<div class="t" style="left:386px;top:723px;color:#ff70ff;">RX: <span class="d">476</span>.<span class="d">0</span>b s    All: <span class="d">39</span>.<span class="d">9</span>GB</div>
<div class="t q" style="left:503px;top:746px;color:#f2f200;">/</div>
<div class="t" style="left:386px;top:746px;color:#f2f200;">TX: <span class="d">9</span>.<span class="d">9</span>Kb s     All: <span class="d">55</span>.<span class="d">0</span>GB</div>
<div class="t" style="left:789px;top:677px;">Processes</div>
<div class="t b" style="left:776px;top:700px;color:#7d97ff;">PID(p)</div>
<div class="t b" style="left:893px;top:700px;color:#7d97ff;">Name(n)</div>
<div class="t b" style="left:1140px;top:700px;color:#7d97ff;">CPU%(c)▼</div>
<div class="t b" style="left:1257px;top:700px;color:#7d97ff;">Mem%(m)</div>
<div class="t b" style="left:1374px;top:700px;color:#7d97ff;">R/s</div>
<div class="t" style="left:776px;top:746px;color:#000;"><span class="d">42054</span></div>
<div class="t" style="left:893px;top:746px;color:#000;">btm</div>
<div class="t p" style="left:1179px;top:746px;color:#000;">%</div>
<div class="t" style="left:1140px;top:746px;color:#000;"><span class="d">2</span>.<span class="d">0</span></div>
<div class="t p" style="left:1296px;top:746px;color:#000;">%</div>
<div class="t" style="left:1257px;top:746px;color:#000;"><span class="d">0</span>.<span class="d">9</span></div>
<div class="t q" style="left:1400px;top:746px;color:#000;">/</div>
<div class="t" style="left:1374px;top:746px;color:#000;"><span class="d">0</span>B s</div>
<div class="t" style="left:776px;top:769px;"><span class="o">1</span></div>
<div class="t" style="left:893px;top:769px;">systemd</div>
<div class="t p" style="left:1179px;top:769px;">%</div>
<div class="t" style="left:1140px;top:769px;"><span class="d">0</span>.<span class="d">0</span></div>
<div class="t p" style="left:1296px;top:769px;">%</div>
<div class="t" style="left:1257px;top:769px;"><span class="o">1</span>.<span class="d">4</span></div>
<div class="t q" style="left:1400px;top:769px;">/</div>
<div class="t" style="left:1374px;top:769px;"><span class="d">0</span>B s</div>
<div class="t" style="left:776px;top:792px;"><span class="d">2</span></div>
<div class="t" style="left:893px;top:792px;">kthreadd</div>
<div class="t p" style="left:1179px;top:792px;">%</div>
<div class="t" style="left:1140px;top:792px;"><span class="d">0</span>.<span class="d">0</span></div>
<div class="t p" style="left:1296px;top:792px;">%</div>
<div class="t" style="left:1257px;top:792px;"><span class="d">0</span>.<span class="d">0</span></div>
<div class="t q" style="left:1400px;top:792px;">/</div>
<div class="t" style="left:1374px;top:792px;"><span class="d">0</span>B s</div>
<div class="t" style="left:776px;top:815px;"><span class="d">3</span></div>
<div class="t" style="left:893px;top:815px;">rcu_gp</div>
<div class="t p" style="left:1179px;top:815px;">%</div>
<div class="t" style="left:1140px;top:815px;"><span class="d">0</span>.<span class="d">0</span></div>
<div class="t p" style="left:1296px;top:815px;">%</div>
<div class="t" style="left:1257px;top:815px;"><span class="d">0</span>.<span class="d">0</span></div>
<div class="t q" style="left:1400px;top:815px;">/</div>
<div class="t" style="left:1374px;top:815px;"><span class="d">0</span>B s</div>
<div class="t" style="left:776px;top:838px;"><span class="d">4</span></div>
<div class="t" style="left:893px;top:838px;">rcu_par_gp</div>
<div class="t p" style="left:1179px;top:838px;">%</div>
<div class="t" style="left:1140px;top:838px;"><span class="d">0</span>.<span class="d">0</span></div>
<div class="t p" style="left:1296px;top:838px;">%</div>
<div class="t" style="left:1257px;top:838px;"><span class="d">0</span>.<span class="d">0</span></div>
<div class="t q" style="left:1400px;top:838px;">/</div>
<div class="t" style="left:1374px;top:838px;"><span class="d">0</span>B s</div>
<div class="t" style="left:776px;top:861px;"><span class="d">5</span></div>
<div class="t" style="left:893px;top:861px;">slub_flushwq</div>
<div class="t p" style="left:1179px;top:861px;">%</div>
<div class="t" style="left:1140px;top:861px;"><span class="d">0</span>.<span class="d">0</span></div>
<div class="t p" style="left:1296px;top:861px;">%</div>
<div class="t" style="left:1257px;top:861px;"><span class="d">0</span>.<span class="d">0</span></div>
<div class="t q" style="left:1400px;top:861px;">/</div>
<div class="t" style="left:1374px;top:861px;"><span class="d">0</span>B s</div>
<div class="t" style="left:776px;top:884px;"><span class="d">6</span></div>
<div class="t" style="left:893px;top:884px;">netns</div>
<div class="t p" style="left:1179px;top:884px;">%</div>
<div class="t" style="left:1140px;top:884px;"><span class="d">0</span>.<span class="d">0</span></div>
<div class="t p" style="left:1296px;top:884px;">%</div>
<div class="t" style="left:1257px;top:884px;"><span class="d">0</span>.<span class="d">0</span></div>
<div class="t q" style="left:1400px;top:884px;">/</div>
<div class="t" style="left:1374px;top:884px;"><span class="d">0</span>B s</div>
<div class="t" style="left:776px;top:907px;"><span class="d">8</span></div>
<div class="t q" style="left:984px;top:907px;">/</div>
<div class="t" style="left:893px;top:907px;">kworker <span class="d">0</span>:<span class="d">0</span>H-even…</div>
<div class="t p" style="left:1179px;top:907px;">%</div>
<div class="t" style="left:1140px;top:907px;"><span class="d">0</span>.<span class="d">0</span></div>
<div class="t p" style="left:1296px;top:907px;">%</div>
<div class="t" style="left:1257px;top:907px;"><span class="d">0</span>.<span class="d">0</span></div>
<div class="t q" style="left:1400px;top:907px;">/</div>
<div class="t" style="left:1374px;top:907px;"><span class="d">0</span>B s</div>
</body></html>
